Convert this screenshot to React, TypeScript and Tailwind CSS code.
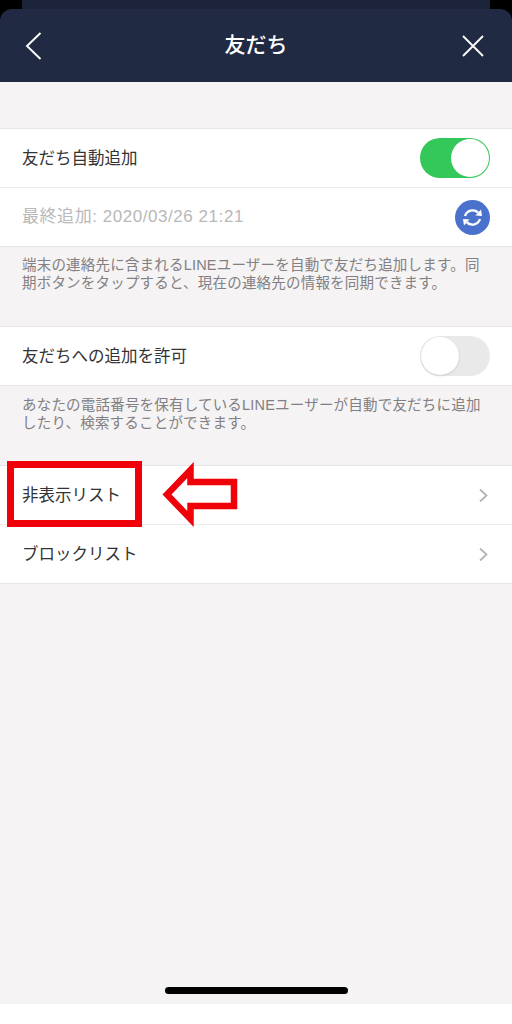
function Toggle({ on }: { on: boolean }) {
    return on ? (
        <div className="flex h-10 w-[70px] items-center justify-end rounded-full bg-[#34c759] pr-px">
            <div className="h-[38px] w-[38px] rounded-full bg-white" />
        </div>
    ) : (
        <div className="flex h-10 w-[70px] items-center rounded-full bg-[#e9e9ea] pl-px">
            <div className="h-[38px] w-[38px] rounded-full bg-white shadow" />
        </div>
    )
}

function SyncIcon() {
    return (
        <div className="flex h-[35px] w-[35px] items-center justify-center rounded-full bg-[#4a72cc]">
            <svg width="25" height="25" viewBox="0 0 25 25" fill="none">
                <path d="M5 11 A8 8 0 0 1 18 7.5" stroke="white" strokeWidth="2.4" />
                <path d="M15.5 10.5 L22 11 L21 4.5 Z" fill="white" />
                <path d="M20 14 A8 8 0 0 1 7 17.5" stroke="white" strokeWidth="2.4" />
                <path d="M9.5 14.5 L3 14 L4 20.5 Z" fill="white" />
            </svg>
        </div>
    )
}

function Chevron() {
    return (
        <svg width="11" height="15" viewBox="0 0 11 15" fill="none">
            <path d="M2 1.5 L8.5 7.5 L2 13.5" stroke="#b5b5b5" strokeWidth="1.8" />
        </svg>
    )
}

export default function App() {
    return (
        <div className="relative h-[1024px] w-[512px] overflow-hidden bg-white font-['Liberation_Sans','Noto_Sans_CJK_JP',sans-serif]">
            {/* status bar sliver + nav */}
            <div className="bg-black">
                <div className="mx-[22px] h-[9px] bg-[#1d2338]" />
                <div className="flex h-[73px] items-center justify-between rounded-t-xl bg-[#212a43] px-[20px]">
                    <svg width="40" height="30" viewBox="0 0 40 30" fill="none">
                        <path d="M20.5 2 L7 15 L20.5 28" stroke="white" strokeWidth="1.9" />
                    </svg>
                    <span className="pb-[2px] text-[21px] font-medium text-white">友だち</span>
                    <svg width="40" height="30" viewBox="0 0 40 30" fill="none">
                        <path d="M11 5 L31 25 M31 5 L11 25" stroke="white" strokeWidth="1.8" />
                    </svg>
                </div>
            </div>

            <div className="flex h-[922px] flex-col bg-[#f5f3f4] pt-[46px]">
                <div className="border-y border-[#e6e4e5] bg-white">
                    <div className="flex h-[59px] items-center justify-between border-b border-[#eeeced] px-[22px]">
                        <span className="text-[16.5px] text-[#333333]">友だち自動追加</span>
                        <Toggle on />
                    </div>
                    <div className="flex h-[58px] items-center justify-between px-[22px]">
                        <span className="text-[17px] tracking-[0.55px] text-[#b8b8b8]">最終追加: 2020/03/26 21:21</span>
                        <SyncIcon />
                    </div>
                </div>
                <p className="pl-[22px] pr-[24px] pt-[9px] text-[14.5px] leading-[18px] tracking-[0.2px] text-[#828082]">
                    端末の連絡先に含まれるLINEユーザーを自動で友だち追加します。同期ボタンをタップすると、現在の連絡先の情報を同期できます。
                </p>

                <div className="mt-[34px] border-y border-[#e6e4e5] bg-white">
                    <div className="flex h-[58px] items-center justify-between px-[22px]">
                        <span className="text-[16.5px] text-[#333333]">友だちへの追加を許可</span>
                        <Toggle on={false} />
                    </div>
                </div>
                <p className="pl-[22px] pr-[24px] pt-[10px] text-[14.5px] leading-[18px] tracking-[0.2px] text-[#828082]">
                    あなたの電話番号を保有しているLINEユーザーが自動で友だちに追加したり、検索することができます。
                </p>

                <div className="mt-[33px] border-y border-[#e6e4e5] bg-white">
                    <div className="flex h-[59px] items-center justify-between border-b border-[#eeeced] pl-[22px] pr-[23px]">
                        <span className="text-[16.5px] text-[#333333]">非表示リスト</span>
                        <Chevron />
                    </div>
                    <div className="flex h-[58px] items-center justify-between pl-[22px] pr-[23px]">
                        <span className="text-[16.5px] text-[#333333]">ブロックリスト</span>
                        <Chevron />
                    </div>
                </div>

                <div className="mt-auto mb-[10px] flex justify-center">
                    <div className="h-[7px] w-[183px] rounded-full bg-black" />
                </div>
            </div>

            {/* red annotation */}
            <div className="absolute left-[7px] top-[461px] h-[66px] w-[135px] border-[7px] border-[#f00008]" />
            <svg className="absolute left-[160px] top-[462px]" width="80" height="66" viewBox="0 0 80 66" fill="none">
                <path d="M30.5 8 L30.5 20 L74 20 L74 44 L30.5 44 L30.5 57 L7 32.5 Z" stroke="#f00008" strokeWidth="6.5" />
            </svg>
        </div>
    )
}
